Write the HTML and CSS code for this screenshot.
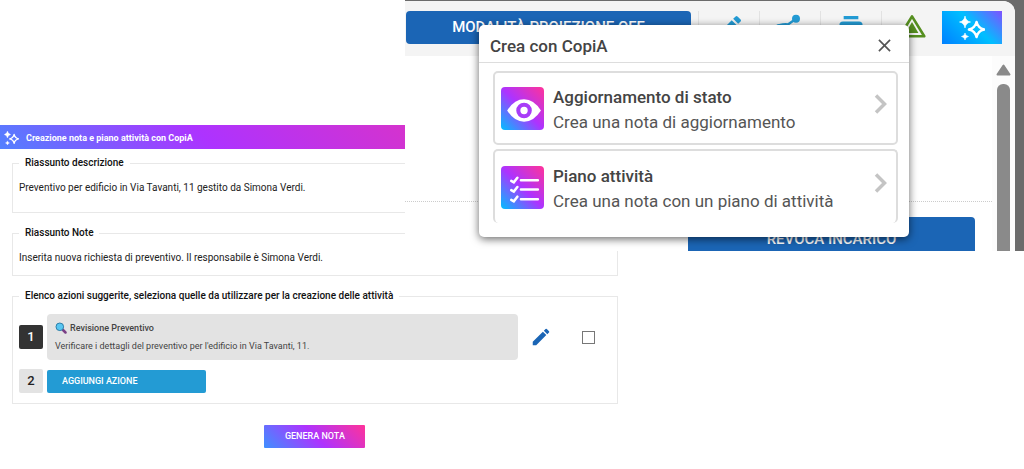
FILE: index.html
```html
<!DOCTYPE html>
<html lang="it">

<head>
    <title>CopiA - Creazione nota e piano attività</title>
    <meta charset="UTF-8" />
    <meta name="viewport" content="width=device-width,initial-scale=1" />
    <link rel="stylesheet" href="styles.css">
</head>

<body>
    <svg class="symbols" aria-hidden="true">
        <symbol id="sparkles" viewBox="0 0 26 24">
            <path d="M17.500 5Q19 12 26 13.500Q19 15 17.500 22Q16 15 9 13.500Q16 12 17.500 5Z" fill="none" stroke="currentColor" stroke-width="2.600" stroke-linejoin="round" transform="translate(1.800 1.350) scale(.9)" />
            <path d="M6 0Q6.700 5 11.500 6Q6.700 7 6 12Q5.300 7 .5 6Q5.300 5 6 0Z" fill="currentColor" stroke="currentColor" stroke-width=".6" />
            <path d="M6 17Q6.500 20 9.500 20.500Q6.500 21 6 24Q5.500 21 2.500 20.500Q5.500 20 6 17Z" fill="currentColor" stroke="currentColor" stroke-width=".6" />
        </symbol>
        <symbol id="pencil" viewBox="0 0 24 24">
            <path fill="currentColor" d="M3 17.250V21h3.750L17.810 9.940l-3.750-3.750L3 17.250zM20.710 7.040a1 1 0 0 0 0-1.410l-2.340-2.340a1 1 0 0 0-1.410 0l-1.830 1.830 3.750 3.750 1.830-1.830z" />
        </symbol>
        <symbol id="chevron" viewBox="0 0 14 20">
            <path d="M2 1.500L10.500 10L2 18.500" fill="none" stroke="currentColor" stroke-width="3.500" />
        </symbol>
    </svg>

    <main class="note">
        <header class="note-header">
            <svg class="note-logo"><use href="#sparkles" /></svg>
            <h1>Creazione nota e piano attività con CopiA</h1>
        </header>
        <form class="note-form">
            <fieldset class="description">
                <legend>Riassunto descrizione</legend>
                <p>Preventivo per edificio in Via Tavanti, 11 gestito da Simona Verdi.</p>
            </fieldset>
            <fieldset>
                <legend>Riassunto Note</legend>
                <p>Inserita nuova richiesta di preventivo. Il responsabile è Simona Verdi.</p>
            </fieldset>
            <fieldset>
                <legend>Elenco azioni suggerite, seleziona quelle da utilizzare per la creazione delle attività</legend>
                <div class="action">
                    <span class="number number-dark">1</span>
                    <div class="action-card">
                        <h2>
                            <svg class="lens" viewBox="0 0 12 12">
                                <path d="M7.500 7.500L10.500 10.500" stroke="#7a3f86" stroke-width="2.500" stroke-linecap="round" />
                                <circle cx="4.800" cy="4.800" r="3.800" fill="#58c6f2" stroke="#2d7fa8" />
                            </svg>
                            Revisione Preventivo
                        </h2>
                        <p>Verificare i dettagli del preventivo per l'edificio in Via Tavanti, 11.</p>
                    </div>
                    <button type="button" class="edit" aria-label="Modifica azione"><svg><use href="#pencil" /></svg></button>
                    <input type="checkbox" class="select-action" aria-label="Seleziona azione 1">
                </div>
                <div class="action">
                    <span class="number">2</span>
                    <button type="button" class="add-action">AGGIUNGI AZIONE</button>
                </div>
            </fieldset>
            <button type="button" class="generate">GENERA NOTA</button>
        </form>
    </main>

    <section class="window">
        <div class="screen">
            <div class="toolbar">
                <button type="button" class="projection">MODALITÀ PROIEZIONE OFF</button>
                <button type="button" class="tool" aria-label="Modifica"><svg><use href="#pencil" /></svg></button>
                <button type="button" class="tool" aria-label="Condividi">
                    <svg viewBox="0 0 24 24">
                        <path d="M16.500 5L10.500 9.300Q8 8.800 4 9.800L16.500 18" fill="none" stroke="currentColor" stroke-width="1.800" />
                        <circle cx="16.500" cy="5" r="3" fill="currentColor" />
                        <circle cx="5" cy="12" r="3" fill="currentColor" />
                        <circle cx="16.500" cy="18" r="3" fill="currentColor" />
                    </svg>
                </button>
                <button type="button" class="tool" aria-label="Stampa">
                    <svg viewBox="0 0 24 24">
                        <path d="M6.500 3h11v2.500h-11zM6 7.200h12a2.700 2.700 0 0 1 2.700 2.700V15H17v4H7v-4H3.300V9.900A2.700 2.700 0 0 1 6 7.200z" fill="currentColor" />
                    </svg>
                </button>
                <button type="button" class="tool warning" aria-label="Avviso">
                    <svg viewBox="0 0 24 24">
                        <path d="M12 3.300L21.200 18.200H2.800Z" fill="none" stroke="currentColor" stroke-width="2" stroke-linejoin="round" />
                        <path d="M12 7.500L16.800 15.800H7.200Z" fill="currentColor" />
                    </svg>
                </button>
                <button type="button" class="copia" aria-label="CopiA"><svg><use href="#sparkles" /></svg></button>
            </div>
            <div class="content">
                <div class="sheet">
                    <button type="button" class="revoke">REVOCA INCARICO</button>
                </div>
                <div class="scrollbar">
                    <svg class="arrow" viewBox="0 0 15 12"><path d="M7.500 1.500L13.500 10.500H1.500Z" fill="#8a8a8a" stroke="#8a8a8a" stroke-width="2" stroke-linejoin="round" /></svg>
                    <div class="thumb"></div>
                </div>
            </div>
        </div>

        <div class="popup" role="dialog" aria-labelledby="popup-title">
            <div class="popup-header">
                <h2 id="popup-title">Crea con CopiA</h2>
                <button type="button" class="close" aria-label="Chiudi">
                    <svg viewBox="0 0 14 14"><path d="M1 1L13 13M13 1L1 13" stroke="currentColor" stroke-width="1.800" /></svg>
                </button>
            </div>
            <div class="options">
                <a href="#stato" class="option">
                    <svg class="option-icon" viewBox="0 0 42 42">
                        <path d="M6 23Q13 12 22.500 12T39 23Q32 34 22.500 34T6 23Z" fill="#fff" />
                        <circle cx="22.500" cy="23" r="5.600" fill="none" stroke="#a83cf8" stroke-width="4" />
                    </svg>
                    <span class="option-text">
                        <strong>Aggiornamento di stato</strong>
                        <span>Crea una nota di aggiornamento</span>
                    </span>
                    <svg class="chevron"><use href="#chevron" /></svg>
                </a>
                <a href="#piano" class="option">
                    <svg class="option-icon" viewBox="0 0 42 42">
                        <g fill="none" stroke="#fff" stroke-width="2.500" stroke-linecap="round">
                            <path d="M19.500 14H36M19.500 23H36M19.500 32.500H36" />
                            <path d="M10 14.500L12.500 16L16 11.500M10 23.500L12.500 25L16 20.500M10 33L12.500 34.500L16 30" />
                        </g>
                    </svg>
                    <span class="option-text">
                        <strong>Piano attività</strong>
                        <span>Crea una nota con un piano di attività</span>
                    </span>
                    <svg class="chevron"><use href="#chevron" /></svg>
                </a>
            </div>
        </div>
    </section>
</body>

</html>
```
FILE: styles.css
```css
* {
    box-sizing: border-box;
}

/* Variables */
:root {
    --blue: #1b65b5;
    --light-blue: #239bd4;
    --violet: #ad33ff;
    --pink: #ff3399;
    --line: #e8e8e8;
}

body {
    margin: 0;
    background: #fff;
    color: #222;
    font: 10px/14px Roboto, Arial, sans-serif;
}

h1,
h2,
p {
    margin: 0;
}

button {
    border: 0;
    padding: 0;
    color: #fff;
    font: inherit;
    cursor: pointer;
}

svg {
    display: block;
}

.symbols {
    position: absolute;
    width: 0;
    height: 0;
}

/* Note form */
.note {
    width: 61.5%;
    padding-top: 125px;
}

.note-header {
    display: flex;
    align-items: center;
    gap: 7px;
    height: 24px;
    padding: 2px 0 0 4px;
    background: linear-gradient(45deg, #5280ff, var(--violet) 33%, var(--pink));
    color: #fff;
}

.note-header h1 {
    font-size: 9px;
    font-weight: 700;
}

.note-logo {
    width: 15px;
    height: 14px;
}

.note-form {
    display: flex;
    flex-direction: column;
    gap: 13px;
    padding: 7px 12px;
}

fieldset {
    min-width: 0;
    margin: 0;
    padding: 11px 6px 10px;
    border: 1px solid var(--line);
}

fieldset.description {
    padding-bottom: 17px;
}

legend {
    padding: 0 6px;
    color: #111;
    font-weight: 500;
}

.action {
    display: flex;
    align-items: center;
    gap: 4px;
}

.action + .action {
    margin-top: 9px;
}

.number {
    width: 24px;
    border-radius: 2px;
    background: #e3e3e3;
    font-size: 13px;
    font-weight: 500;
    line-height: 24px;
    text-align: center;
}

.number-dark {
    background: #333;
    color: #fff;
}

.action-card {
    flex: 1;
    padding: 6px 8px;
    border-radius: 4px;
    background: #e3e3e3;
    color: #444;
    font-size: 9px;
    line-height: 16px;
}

.action-card h2 {
    display: flex;
    align-items: center;
    gap: 3px;
    font-size: 9px;
    font-weight: 500;
}

.action-card p {
    margin-top: 2px;
}

.lens {
    width: 12px;
    height: 12px;
}

.edit {
    margin: 0 26px 0 8px;
    background: none;
    color: var(--blue);
}

.edit svg {
    width: 22px;
    height: 22px;
}

.select-action {
    appearance: none;
    width: 13px;
    height: 13px;
    margin: 0 16px 0 0;
    border: 1px solid #777;
    background: #fff;
}

.select-action:checked {
    background: var(--blue);
}

.add-action {
    width: 159px;
    padding-left: 15px;
    border-radius: 2px;
    background: var(--light-blue);
    font-size: 9px;
    font-weight: 500;
    line-height: 23px;
    text-align: left;
}

.generate {
    align-self: center;
    width: 101px;
    margin-top: 8px;
    border-radius: 1px;
    background: linear-gradient(45deg, #3e90ff, var(--violet) 50%, var(--pink));
    font-size: 9px;
    font-weight: 500;
    line-height: 23px;
}

/* Application window, laid over the note */
.window {
    position: absolute;
    top: 0;
    right: 0;
    width: 60.45%;
    padding: 1px 9px 0 0;
    background: #6b6b6b;
}

.screen {
    overflow: hidden;
    border-radius: 0 12px 0 0;
    background: #fff;
}

.toolbar {
    display: flex;
    align-items: center;
    height: 55px;
    padding: 0 13px 2px 1px;
    background: #f4f4f4;
}

.projection {
    flex: 1;
    margin-right: 7px;
    border-radius: 4px;
    background: var(--blue);
    font-size: 15px;
    font-weight: 500;
    line-height: 33px;
}

.tool {
    display: flex;
    align-items: center;
    justify-content: center;
    width: 61px;
    height: 33px;
    border-left: 1px solid #e2e2e2;
    background: none;
    color: var(--light-blue);
}

.tool svg {
    width: 32px;
    height: 32px;
}

.warning {
    color: #568f20;
}

.copia {
    display: flex;
    align-items: center;
    justify-content: center;
    width: 60px;
    height: 33px;
    background: linear-gradient(45deg, #0080ff, #00bfff 55%, #8050ff);
}

.copia svg {
    width: 26px;
    height: 24px;
}

.content {
    display: flex;
}

.sheet {
    flex: 1;
    padding-top: 145px;
}

.sheet::before {
    content: "";
    display: block;
    border-top: 1px dotted #ccc;
}

.revoke {
    display: block;
    width: 287px;
    margin: 15px 17px -10px auto;
    border-radius: 4px;
    background: var(--blue);
    font-size: 15px;
    font-weight: 500;
    line-height: 44px;
}

.scrollbar {
    display: flex;
    flex-direction: column;
    align-items: center;
    gap: 8px;
    width: 23px;
    padding-top: 8px;
    background: #fcfcfc;
}

.arrow {
    width: 15px;
    height: 12px;
}

.thumb {
    flex: 1;
    width: 13px;
    border-radius: 6px 6px 0 0;
    background: #8a8a8a;
}

/* CopiA popup */
.popup {
    position: absolute;
    top: 25px;
    left: 74px;
    right: 115px;
    padding-bottom: 14px;
    border-radius: 5px;
    background: #fff;
    box-shadow: 0 2px 8px rgba(0, 0, 0, .6);
}

.popup-header {
    display: flex;
    align-items: center;
    justify-content: space-between;
    height: 38px;
    padding: 4px 18px 0 11px;
    border-bottom: 1px solid #ddd;
}

.popup-header h2 {
    color: #444;
    font-size: 17px;
    font-weight: 500;
    line-height: 20px;
}

.close {
    background: none;
    color: #555;
}

.close svg {
    width: 13px;
    height: 13px;
}

.options {
    padding: 8px 11px 0 14px;
}

.option {
    display: flex;
    align-items: center;
    gap: 9px;
    height: 74px;
    padding: 0 8px 0 6px;
    border: 2px solid #ddd;
    border-radius: 5px;
    color: #555;
    font-size: 17px;
    line-height: 25px;
    text-decoration: none;
}

.option + .option {
    margin-top: 4px;
    border-bottom: 0;
}

.option-icon {
    width: 43px;
    height: 43px;
    border-radius: 4px;
    background: linear-gradient(45deg, #00bfff, var(--violet) 50%, var(--pink));
}

.option-text {
    display: flex;
    flex: 1;
    flex-direction: column;
    padding-top: 4px;
}

.option strong {
    color: #444;
    font-weight: 500;
}

.chevron {
    width: 14px;
    height: 20px;
    margin-bottom: 8px;
    color: #c4c4c4;
}
```
